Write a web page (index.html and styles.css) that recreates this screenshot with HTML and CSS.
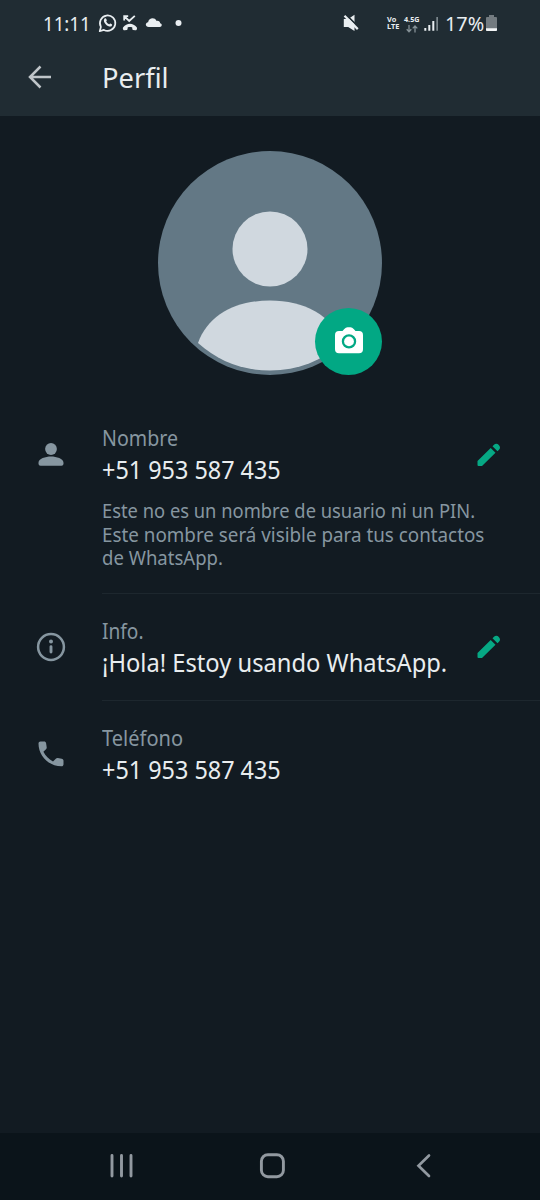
FILE: index.html
```html
<!DOCTYPE html>
<html lang="es">
<head>
<meta charset="utf-8">
<title>Perfil</title>
<link rel="stylesheet" href="styles.css">
</head>
<body>
<div class="screen">
  <header class="top">
    <div class="status">
      <span class="clock"><span class="t t-clock">11:11</span></span>
      <svg class="status-left" width="90" height="24" viewBox="0 0 90 24">
        <path d="M1.700 22.200l1.200-4.300a7.700 7.700 0 1 1 3 3z" fill="none" stroke="#e9eef1" stroke-width="1.700" stroke-linejoin="round"/>
        <path d="M6.500 9.800c.8-.8 1.500-.5 1.800.3l.5 1.200c.2.500-.7 1-.5 1.400.6 1.200 1.500 2 2.700 2.600.5.200.9-.9 1.400-.7l1.400.7c.8.500.1 1.700-.7 2.100-1.200.6-3.500-.2-5.200-1.900-1.800-1.900-2.800-4.100-1.400-5.700z" fill="#e9eef1"/>
        <path d="M26.200 11.500V7.200h4M26.600 7.500l4.600 4.500 5.600-5.200" fill="none" stroke="#e9eef1" stroke-width="1.800"/>
        <path d="M25.200 18.300c3.500-4.700 10-4.700 13.500 0 .5.700.4 1.900-.1 2.500q-.6.700-1.400.5l-2.200-.4q-.7-.2-.7-.9v-1.600c-1.500-.6-3.200-.6-4.700 0v1.600q0 .7-.7.900l-2.200.4q-.8.200-1.400-.5c-.5-.6-.6-1.800-.1-2.500z" fill="#e9eef1"/>
        <path d="M50.700 18c-3.600 0-3.800-4.300-.6-4.700.5-4.400 6.700-5.400 8.200-1.500 2.600-.4 3.900 1 3.800 2.500 2.400.3 2.200 3.700-.4 3.700z" fill="#e9eef1"/>
        <circle cx="80.500" cy="14" r="3" fill="#e9eef1"/>
      </svg>
      <svg class="mute" width="18" height="20" viewBox="0 0 18 20">
        <path d="M.8 6h4.400L11.500 1.700v16.300L5.200 14H.8z" fill="#e9eef1"/>
        <path d="M3 1.700l13.300 13.200" stroke="#202c33" stroke-width="1.800"/>
        <path d="M1.500 2.800l13.300 13.300" stroke="#e9eef1" stroke-width="2.200"/>
      </svg>
      <span class="volte"><span>Vo</span><span>LTE</span></span>
      <span class="net"><b>4.5G</b>
        <svg width="12" height="8" viewBox="0 0 12 8"><path d="M3 0v6.500M.7 4.300L3 6.700l2.300-2.400M9 7.500V1M6.700 3.400L9 1l2.300 2.400" fill="none" stroke="#849096" stroke-width="1.300"/></svg>
      </span>
      <svg class="signal" width="15" height="16" viewBox="0 0 15 16">
        <path d="M.3 12h2v2.700h-2zM4.300 9h2v5.700h-2zM8.300 5h2v9.700h-2z" fill="#e9eef1"/>
        <path d="M12.300 1h1.700v13.700h-1.700z" fill="#7b868c"/>
      </svg>
      <span class="percent"><span class="t t-percent">17%</span></span>
      <svg class="battery" width="11" height="17" viewBox="0 0 11 17">
        <path d="M3 0h5v2h2q1 0 1 1v12q0 1-1 1H1q-1 0-1-1V3q0-1 1-1h2z" fill="#737b80"/>
        <path d="M0 13.200h11V15q0 1-1 1H1q-1 0-1-1z" fill="#f2f5f6"/>
      </svg>
    </div>
    <div class="bar">
      <svg class="back" width="24" height="24" viewBox="0 0 24 24"><path d="M23 12H2M12.500 1.500L2 12l10.500 10.500" fill="none" stroke="#bfc5c9" stroke-width="2.500"/></svg>
      <h1 class="title"><span class="t t-title">Perfil</span></h1>
    </div>
  </header>

  <main class="content">
    <div class="avatar">
      <svg width="224" height="224" viewBox="0 0 224 224">
        <circle cx="112" cy="112" r="112" fill="#637885"/>
        <circle cx="112" cy="98" r="37.500" fill="#d0d8df"/>
        <path d="M40 192C50 164 78 149.500 112 149.500S174 164 184 192C164 210 140 219.500 112 219.500S60 210 40 192z" fill="#d0d8df"/>
      </svg>
      <div class="camera">
        <svg width="28" height="27" viewBox="0 0 28 27">
          <path fill-rule="evenodd" d="M4 4h3.500l1.800-2q1.500-1.700 3.200-1.700h3q1.700 0 3.200 1.700L20.500 4H24q4 0 4 4v14.300q0 4-4 4H4q-4 0-4-4V8q0-4 4-4zM14 7.200a7.200 7.200 0 1 0 0 14.400a7.200 7.200 0 1 0 0-14.400z" fill="#fff"/>
          <circle cx="14" cy="14.400" r="4.900" fill="#fff"/>
        </svg>
      </div>
    </div>

    <section class="row">
      <div class="lead"><svg width="26" height="24" viewBox="0 0 26 24"><circle cx="13" cy="6" r="5.900" fill="#8696a0"/><path d="M13 13.500c5.500 0 12.500 2.200 12.500 6.300v1q0 2-2 2H2.500q-2 0-2-2v-1c0-4.100 7-6.300 12.500-6.300z" fill="#8696a0"/></svg></div>
      <div class="body">
        <div class="label"><span class="t t-nombre">Nombre</span></div>
        <div class="value"><span class="t t-number">+51 953 587 435</span></div>
        <p class="help"><span class="t t-help1">Este no es un nombre de usuario ni un PIN.</span><span class="t t-help2">Este nombre será visible para tus contactos</span><span class="t t-help3">de WhatsApp.</span></p>
      </div>
      <svg class="edit" width="24" height="24" viewBox="0 0 24 24"><path d="M.5 18L13.700 5l4.800 4.800L5 23H1.500Q.5 23 .5 22zM15.500 3.200l1.500-1.500c3-3.200 8.200 2 5 5L20.500 8.200z" fill="#06a884"/></svg>
    </section>

    <section class="row row-info">
      <div class="lead"><svg width="30" height="30" viewBox="0 0 30 30"><circle cx="15" cy="15" r="12.900" fill="none" stroke="#8696a0" stroke-width="2.500"/><circle cx="15" cy="9.600" r="2" fill="#8696a0"/><path d="M15 14.800v5.300" stroke="#8696a0" stroke-width="2.900" stroke-linecap="round"/></svg></div>
      <div class="body">
        <div class="label"><span class="t t-info">Info.</span></div>
        <div class="value"><span class="t t-hola">¡Hola! Estoy usando WhatsApp.</span></div>
      </div>
      <svg class="edit" width="24" height="24" viewBox="0 0 24 24"><path d="M.5 18L13.700 5l4.800 4.800L5 23H1.500Q.5 23 .5 22zM15.500 3.200l1.500-1.500c3-3.200 8.200 2 5 5L20.500 8.200z" fill="#06a884"/></svg>
    </section>

    <section class="row row-phone">
      <div class="lead"><svg width="26" height="26" viewBox="0 0 26 26"><path d="M2.500.5h3.600c1.100 0 1.800.6 2 1.700l.6 4c.1.800-.1 1.500-.7 2L5.400 10.800c2.200 4.300 5.300 7.400 9.600 9.700l2.800-2.700c.5-.5 1.200-.8 2-.7l3.900.7c1.100.2 1.800.9 1.800 2v3.400c0 1.300-.8 2.100-2 2.100C11 25.300.5 15 .5 2.500.5 1.300 1.300.5 2.500.5z" fill="#8696a0"/></svg></div>
      <div class="body">
        <div class="label"><span class="t t-tel">Teléfono</span></div>
        <div class="value"><span class="t t-number">+51 953 587 435</span></div>
      </div>
    </section>
  </main>

  <nav class="nav">
    <svg width="24" height="26" viewBox="0 0 24 26"><path d="M3 2.500v20.500M12.500 2.500v20.500M22 2.500v20.500" stroke="#9299a0" stroke-width="2.900" stroke-linecap="round"/></svg>
    <svg width="26" height="26" viewBox="0 0 26 26"><rect x="2.400" y="1.700" width="22" height="22" rx="6.500" fill="none" stroke="#9299a0" stroke-width="2.900"/></svg>
    <svg width="16" height="26" viewBox="0 0 16 26"><path d="M13 2.500L2.500 12.700 13 23" fill="none" stroke="#9299a0" stroke-width="2.700" stroke-linecap="round"/></svg>
  </nav>
</div>
</body>
</html>
```
FILE: styles.css
```css
* { box-sizing: border-box; }
body { margin: 0; background: #121b22; font-family: "Noto Sans", Roboto, sans-serif; font-weight: 400; }
svg { display: block; flex: none; }
.screen { width: 540px; height: 1200px; display: flex; flex-direction: column; overflow: hidden; background: #121b22; }
.t { display: block; width: max-content; white-space: nowrap; transform: scaleX(.91); transform-origin: 0 50%; }

.top { height: 116px; background: #202c33; }
.status { height: 46px; padding-left: 43px; display: flex; align-items: flex-start; color: #e9eef1; }
.clock { width: 55px; margin-top: 9px; font-size: 20.5px; line-height: 28px; }
.status-left { margin-top: 9px; }
.mute { margin-left: 155px; margin-top: 13px; }
.volte { width: 17px; margin: 16px 0 0 26px; font-size: 7.4px; line-height: 7px; font-weight: 700; }
.volte span { display: block; }
.net { width: 18px; padding-top: 16px; font-size: 8px; line-height: 8px; }
.net b { display: block; font-size: 7.2px; line-height: 7px; }
.net svg { margin: 2px 0 0 2px; }
.signal { margin: 16px 0 0 2px; }
.percent { width: 41px; margin: 9px 0 0 6px; font-size: 20.5px; line-height: 28px; }
.battery { margin-top: 15px; }
.bar { height: 62px; padding-left: 28px; display: flex; align-items: center; }
.title { margin: 2px 0 0 49.5px; font-size: 27px; font-weight: 400; line-height: 36px; color: #e9edef; }

.content { flex: 1; padding-top: 35px; }
.avatar { width: 224px; height: 224px; margin: 0 auto 49px; position: relative; }
.camera { position: absolute; left: 157px; top: 157px; width: 67px; height: 67px; border-radius: 50%; background: #02a884; display: flex; align-items: center; justify-content: center; padding-bottom: 2px; }
.row { display: flex; align-items: flex-start; }
.lead { width: 102px; display: flex; justify-content: center; padding-top: 19px; }
.body { width: 375px; }
.label { font-size: 21px; line-height: 28px; color: #8696a0; }
.value { font-size: 25.5px; line-height: 34px; color: #e9edef; }
.help { margin: 14px 0 0; font-size: 19px; line-height: 23.7px; color: #8696a0; }
.edit { margin-top: 19px; }
.row-info, .row-phone { padding-top: 24px; background: linear-gradient(#1d272e, #1d272e) 102px 0 / 438px 1px no-repeat; }
.row-info { margin-top: 22px; }
.row-info .lead { padding-top: 15px; }
.row-info .edit { margin-top: 18px; }
.row-phone { margin-top: 21px; }
.row-phone .lead { padding-top: 17px; }

.nav { height: 67px; background: #0b141a; display: flex; align-items: center; padding: 0 0 2px 109px; }
.nav svg:nth-child(2) { margin-left: 126px; }
.nav svg:nth-child(3) { margin-left: 131px; }

.t-percent { transform: scaleX(.97); }
.t-title { transform: scaleX(1.01); }
.t-nombre { transform: scaleX(.935); }
.t-number { transform: scaleX(.917); }
.t-hola { transform: scaleX(.93); }
.t-tel { transform: scaleX(.955); }
.t-help1 { transform: scaleX(.965); }
.t-help2 { transform: scaleX(.99); }
.t-help3 { transform: scaleX(.975); }
```
